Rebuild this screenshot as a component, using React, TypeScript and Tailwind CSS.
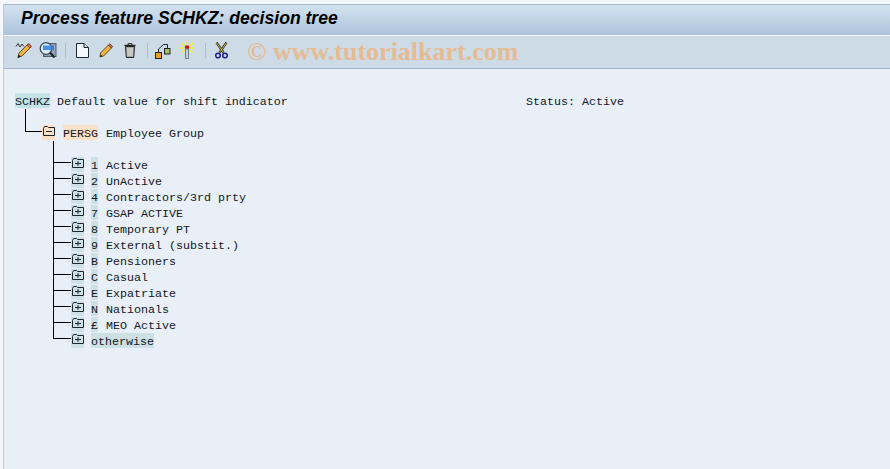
const rows = [
  { key: "1", label: "Active" },
  { key: "2", label: "UnActive" },
  { key: "4", label: "Contractors/3rd prty" },
  { key: "7", label: "GSAP ACTIVE" },
  { key: "8", label: "Temporary PT" },
  { key: "9", label: "External (substit.)" },
  { key: "B", label: "Pensioners" },
  { key: "C", label: "Casual" },
  { key: "E", label: "Expatriate" },
  { key: "N", label: "Nationals" },
  { key: "£", label: "MEO Active" },
];

function Separator() {
  return <div className="w-px h-[15px] bg-[#a9bed3]" />;
}

function PencilSquiggle() {
  return (
    <svg width="18" height="17" viewBox="0 0 18 17" fill="none">
      <path d="M1 4.5 L3 1.5 L5 5 L7 2 L9 4.5" stroke="#333" strokeWidth="1" />
      <path d="M4 11 L12 3 L15 6 L7 14 L3 15.5 Z" fill="#f2b33c" stroke="#5b4a2a" strokeWidth="1" />
      <path d="M12 3 L14 1.5 L16.5 4.5 L15 6 Z" fill="#e8705a" stroke="#7a3a2a" strokeWidth="1" />
      <path d="M2.5 16 L3.5 12.5 L6 14.5 Z" fill="#222" />
    </svg>
  );
}

function ScreenSearch() {
  return (
    <svg width="18" height="17" viewBox="0 0 18 17" fill="none">
      <rect x="4.5" y="1.5" width="12.5" height="13" fill="#8fa3b5" stroke="#4d5f70" />
      <circle cx="7" cy="6.5" r="5.8" fill="#d9e9f7" stroke="#3d4a58" strokeWidth="1.3" />
      <rect x="4" y="3.5" width="11" height="4.5" fill="#2f7fe0" opacity="0.85" />
      <path d="M11 10.5 L15.5 15.5" stroke="#222" strokeWidth="2" />
    </svg>
  );
}

function NewDoc() {
  return (
    <svg width="13" height="15" viewBox="0 0 13 15" fill="none">
      <path d="M0.5 0.5 H8 L12.5 4.5 V14.5 H0.5 Z" fill="#f3f8fd" stroke="#1c2630" />
      <path d="M8 0.5 V4.5 H12.5" fill="#c9d7e4" stroke="#1c2630" />
    </svg>
  );
}

function Pencil() {
  return (
    <svg width="14" height="15" viewBox="0 0 14 15" fill="none">
      <path d="M1.5 10 L9.5 2 L12.5 5 L4.5 13 L1 14 Z" fill="#f2b33c" stroke="#5b4a2a" strokeWidth="1" />
      <path d="M9.5 2 L11 0.8 L13.5 3.5 L12.5 5 Z" fill="#e8705a" stroke="#7a3a2a" strokeWidth="1" />
      <path d="M1 14 L1.8 11.5 L3.5 13.2 Z" fill="#222" />
    </svg>
  );
}

function Trash() {
  return (
    <svg width="12" height="15" viewBox="0 0 12 15" fill="none">
      <path d="M0.5 2.5 H11.5" stroke="#222" strokeWidth="1.4" />
      <path d="M4 2 V0.7 H8 V2" stroke="#222" />
      <path d="M1.5 3.5 H10.5 L9.7 14.5 H2.3 Z" fill="#a8a8a4" stroke="#222" />
      <path d="M4 5 V13 M6 5 V13 M8 5 V13" stroke="#e8e8e4" />
    </svg>
  );
}

function Hierarchy() {
  return (
    <svg width="16" height="16" viewBox="0 0 16 16" fill="none">
      <path d="M3.5 9 V6 L8.5 1.5 H12.5 V5" stroke="#222" />
      <rect x="0.5" y="9.5" width="6" height="6" fill="#f0a020" stroke="#222" />
      <rect x="9.5" y="5.5" width="5.5" height="5.5" fill="#a8c060" stroke="#222" />
    </svg>
  );
}

function Wand() {
  return (
    <svg width="14" height="17" viewBox="0 0 14 17" fill="none">
      <path d="M7 0 V2.5 M1 1 L4.5 4 M13 1 L9.5 4 M0 6 H4 M10 6 H14 M1.5 10.5 L4.5 8 M12.5 10.5 L9.5 8" stroke="#fff200" strokeWidth="1.3" />
      <rect x="5" y="3.5" width="4" height="3.5" fill="#e0101a" />
      <rect x="5.5" y="7" width="3" height="9.5" fill="#c4d0dc" stroke="#6d7f90" strokeWidth="1" />
    </svg>
  );
}

function Scissors() {
  return (
    <svg width="13" height="17" viewBox="0 0 13 17" fill="none">
      <path d="M1.5 0.5 L8.5 10.5 M11.5 0.5 L4.5 10.5" stroke="#222" strokeWidth="2.2" />
      <path d="M1.7 1 L8.2 10 M11.3 1 L4.8 10" stroke="#f2d84a" strokeWidth="0.9" />
      <circle cx="3" cy="13.5" r="2.3" stroke="#1a1f8c" strokeWidth="1.5" />
      <circle cx="10" cy="13.5" r="2.3" stroke="#1a1f8c" strokeWidth="1.5" />
    </svg>
  );
}

function FolderIcon({ plus }: { plus: boolean }) {
  return (
    <svg width="12" height="10" viewBox="0 0 12 10" fill="none" className="mt-[-3px]">
      <path d="M0.5 2.5 V9.5 H11.5 V1.5 H5.5 L4.5 0.5 H1.5 Z" stroke="#1c2630" />
      {plus ? (
        <path d="M3 5.5 H9 M6 3 V8" stroke="#1c2630" />
      ) : (
        <path d="M3 5.5 H9" stroke="#1c2630" />
      )}
    </svg>
  );
}

// one 16px tree row with its connector lines
function Connector({ last }: { last?: boolean }) {
  return (
    <div className="relative w-[18px] h-4 shrink-0">
      <div className={`absolute left-0 top-0 w-px bg-black ${last ? "h-[6px]" : "h-4"}`} />
      <div className="absolute left-0 top-[5px] w-[18px] h-px bg-black" />
    </div>
  );
}

function Node({ code, label, last }: { code: string; label?: string; last?: boolean }) {
  return (
    <div className="flex h-4 ml-[49px]">
      <Connector last={last} />
      <div className="w-[13px] h-[15px] bg-[#cde0e4] flex items-center justify-center">
        <FolderIcon plus />
      </div>
      <div className="ml-[7px] h-[15px] bg-[#cde0e4] leading-[18px]">{code}</div>
      {label && <div className="ml-[8px] leading-[18px]">{label}</div>}
    </div>
  );
}

export default function App() {
  return (
    <div className="w-[890px] h-[469px] overflow-hidden bg-[#f3f6fa] pt-[4px] pl-[3px]">
      <div className="h-full border-l border-[#bccbda] bg-[#e8eff7]">
        <div className="h-px bg-[#a9b8c8]" />
        <div className="h-[30px] bg-gradient-to-b from-[#d3e2ef] to-[#acc3dc] pl-[17px] pb-[3px] flex items-center">
          <h1 className="text-[17.6px] font-bold italic text-black font-['Liberation_Sans',sans-serif] leading-none">
            Process feature SCHKZ: decision tree
          </h1>
        </div>
        <div className="h-px bg-[#f4f8fc]" />
        <div className="h-[33px] bg-[#cddbe7] border-b border-[#a3b5c7] flex items-center pl-[11px] pb-[3px]">
          <div className="w-[18px] flex justify-center"><PencilSquiggle /></div>
          <div className="ml-[6px] w-[18px] flex justify-center"><ScreenSearch /></div>
          <div className="ml-[8px]"><Separator /></div>
          <div className="ml-[9px] w-[14px] flex justify-center"><NewDoc /></div>
          <div className="ml-[10px] w-[14px] flex justify-center"><Pencil /></div>
          <div className="ml-[10px] w-[14px] flex justify-center"><Trash /></div>
          <div className="ml-[10px]"><Separator /></div>
          <div className="ml-[7px] w-[16px] flex justify-center"><Hierarchy /></div>
          <div className="ml-[9px] w-[14px] flex justify-center"><Wand /></div>
          <div className="ml-[11px]"><Separator /></div>
          <div className="ml-[9px] w-[13px] flex justify-center"><Scissors /></div>
          <div className="ml-[19px] mt-[3px] text-[26px] font-bold text-[#e5bb94] font-['Liberation_Serif',serif] leading-none whitespace-nowrap">
            © www.tutorialkart.com
          </div>
        </div>

        <div className="pt-6 text-[11.67px] text-[#10181f] font-['Liberation_Mono',monospace] whitespace-pre">
          <div className="flex h-4 pl-[11px]">
            <div className="w-[35px] h-[15px] bg-[#c3e3e6] leading-[18px]">SCHKZ</div>
            <div className="ml-[7px] w-[469px] leading-[18px]">Default value for shift indicator</div>
            <div className="leading-[18px]">Status: Active</div>
          </div>
          <div className="relative h-4 ml-[21px]">
            <div className="absolute left-0 top-0 w-px h-4 bg-black" />
          </div>
          <div className="flex h-4 ml-[21px]">
            <div className="relative w-[17px] h-4">
              <div className="absolute left-0 top-0 w-px h-[6px] bg-black" />
              <div className="absolute left-0 top-[6px] w-[17px] h-px bg-black" />
            </div>
            <div className="w-[13px] h-[15px] bg-[#f9e0c6] flex items-center justify-center">
              <FolderIcon plus={false} />
            </div>
            <div className="ml-[8px] w-[35px] h-[15px] bg-[#f9e0c6] leading-[18px]">PERSG</div>
            <div className="ml-[8px] leading-[18px]">Employee Group</div>
          </div>
          <div className="relative h-4 ml-[49px]">
            <div className="absolute left-0 top-0 w-px h-4 bg-black" />
          </div>
          {rows.map((row) => (
            <Node key={row.key} code={row.key} label={row.label} />
          ))}
          <Node code="otherwise" last />
        </div>
      </div>
    </div>
  );
}
